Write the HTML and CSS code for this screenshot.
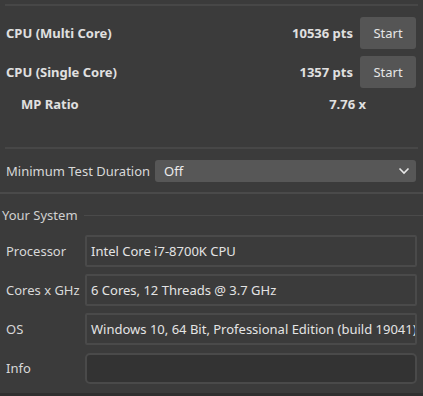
FILE: index.html
```html
<!DOCTYPE html>
<html>
<head>
    <title>CPU Benchmark</title>
    <meta name="viewport" content="width=device-width, initial-scale=1.0">
    <link rel="stylesheet" href="styles.css">
</head>
<body>
    <div class="bench">
        <div class="rule"></div>

        <div class="tests">
            <div class="test-name">CPU (Multi Core)</div>
            <div class="test-score">10536 pts</div>
            <button class="start">Start</button>

            <div class="test-name">CPU (Single Core)</div>
            <div class="test-score">1357 pts</div>
            <button class="start">Start</button>

            <div class="test-name ratio">MP Ratio</div>
            <div class="test-score ratio-value">7.76 x</div>
            <div></div>
        </div>

        <div class="rule"></div>

        <div class="duration">
            <label>Minimum Test Duration</label>
            <div class="select">
                <span>Off</span>
                <svg width="12" height="8" viewBox="0 0 12 8"><path d="M1.5 1.5 L6 6 L10.5 1.5" fill="none" stroke="#e8e8e8" stroke-width="1.6"/></svg>
            </div>
        </div>
    </div>

    <div class="divider"></div>

    <div class="system">
        <div class="section-title">
            <span>Your System</span>
            <div class="title-line"></div>
        </div>

        <div class="fields">
            <div class="field-label">Processor</div>
            <div class="field">Intel Core i7-8700K CPU</div>

            <div class="field-label">Cores x GHz</div>
            <div class="field">6 Cores, 12 Threads @ 3.7 GHz</div>

            <div class="field-label">OS</div>
            <div class="field">Windows 10, 64 Bit, Professional Edition (build 19041)</div>

            <div class="field-label">Info</div>
            <div class="field info"></div>
        </div>
    </div>

    <div class="footer"></div>
</body>
</html>
```

FILE: styles.css
```css
* {
    box-sizing: border-box;
    margin: 0;
    padding: 0;
}

html, body {
    height: 100%;
}

body {
    font-family: "Noto Sans", "Open Sans", sans-serif;
    font-size: 13px;
    color: #dcdcdc;
    background: #3b3b3b;
    display: flex;
    flex-direction: column;
    overflow: hidden;
}

.bench {
    padding: 4px 5px 0 5px;
}

.rule {
    height: 2px;
    background: #474747;
}

.tests {
    display: grid;
    grid-template-columns: 1fr auto 56px;
    grid-template-rows: 32px 32px 18px;
    column-gap: 7px;
    row-gap: 7px;
    align-items: center;
    padding: 11px 2px 0 1px;
    height: 141px;
    align-content: start;
}

.test-name {
    font-weight: bold;
    color: #e0e0e0;
}

.test-score {
    font-weight: bold;
    text-align: right;
    color: #e0e0e0;
}

.ratio {
    padding-left: 15px;
}

.ratio-value {
    margin-right: -13px;
}

.start {
    height: 32px;
    width: 56px;
    border: none;
    border-radius: 3px;
    background: #555555;
    color: #e6e6e6;
    font-family: inherit;
    font-size: 13px;
}

.duration {
    display: flex;
    align-items: center;
    gap: 5px;
    padding: 11px 2px 10px 1px;
}

.duration label {
    color: #d8d8d8;
}

.select {
    flex: 1;
    height: 22px;
    border-radius: 3px;
    background: #575757;
    display: flex;
    align-items: center;
    justify-content: space-between;
    padding: 0 6px 0 9px;
    color: #ececec;
}

.divider {
    height: 2px;
    background: #4a4a4a;
}

.system {
    flex: 1;
    padding: 12px 0 0 0;
}

.section-title {
    display: flex;
    align-items: center;
    gap: 6px;
    padding-left: 2px;
    color: #d0d0d0;
}

.title-line {
    flex: 1;
    height: 1px;
    background: #4a4a4a;
}

.fields {
    display: grid;
    grid-template-columns: 79px 1fr;
    grid-auto-rows: 32px;
    row-gap: 7px;
    align-items: center;
    padding: 11px 6px 0 6px;
}

.field-label {
    color: #d8d8d8;
}

.field {
    height: 32px;
    border: 2px solid #4a4a4a;
    border-radius: 2px;
    padding: 0 4px;
    display: flex;
    align-items: center;
    white-space: nowrap;
    overflow: hidden;
    color: #e4e4e4;
}

.field.info {
    height: 31px;
    background: #333333;
    border-radius: 5px;
}

.footer {
    height: 3px;
    background: #2f2f2f;
}
```
